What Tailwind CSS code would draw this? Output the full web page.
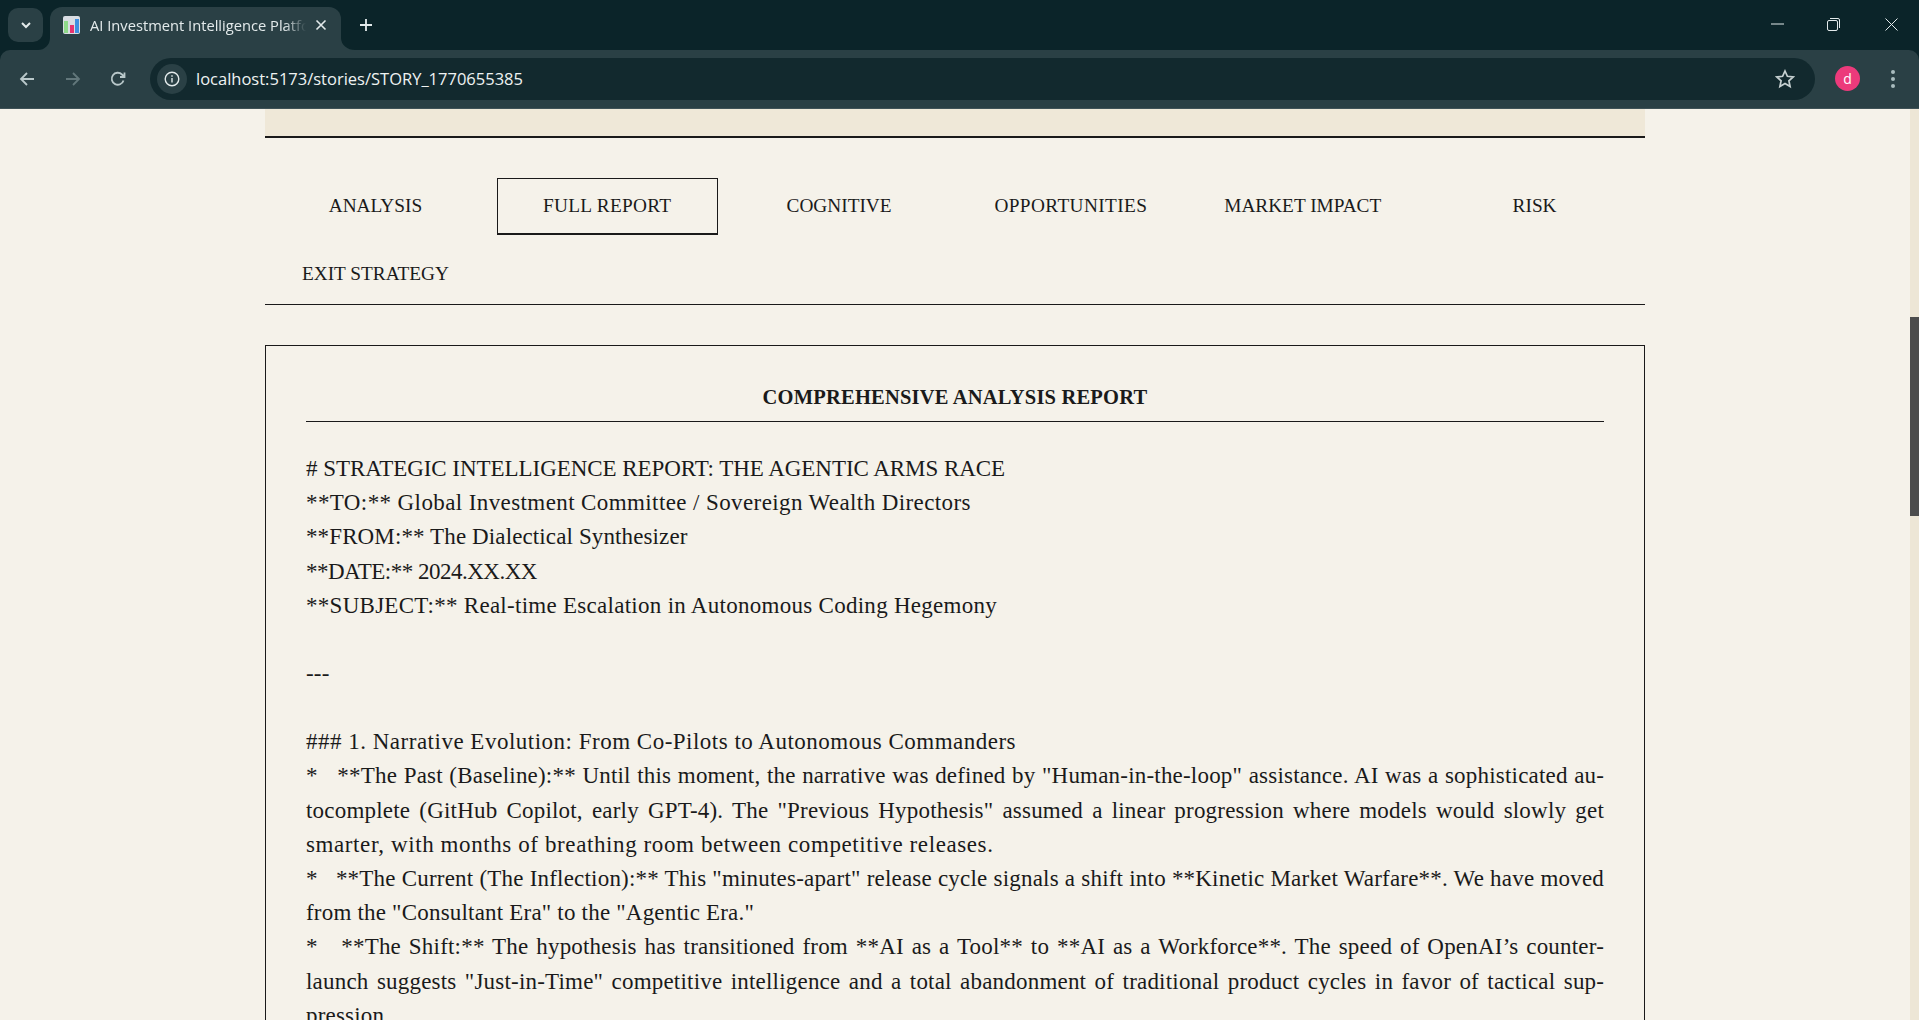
<!DOCTYPE html>
<html lang="en">
<head>
  <meta charset="UTF-8" />
  <title>AI Investment Intelligence Platform</title>
  <script src="https://cdn.jsdelivr.net/npm/@tailwindcss/browser@4"></script>
</head>
<body class="h-[1020px] overflow-hidden bg-[#f5f2ea] font-['Liberation_Serif',serif] text-[#1a1a1a]">
  <!-- Browser chrome -->
  <header class="bg-[#0b2429] font-['Open_Sans',sans-serif] text-[#e3eaeb]">
    <div class="flex h-[50px] pl-2 pt-2">
      <button class="flex h-[34px] w-[35px] items-center justify-center rounded-[10px] bg-[#2a4045]">
        <svg width="12" height="12" viewBox="0 0 12 12" fill="none" stroke="#e3eaeb" stroke-width="2"><path d="M2 4l4 4 4-4"/></svg>
      </button>
      <div class="relative -mt-px ml-[7px] flex h-[43px] w-[291px] items-center rounded-t-[12px] bg-[#2a4045] pb-[7px] pl-[13px] pr-[14px]">
        <svg class="absolute bottom-0 -left-[12px]" width="12" height="12" viewBox="0 0 12 12" fill="#2a4045"><path d="M12 0v12H0A12 12 0 0 0 12 0z"/></svg>
        <svg width="17" height="18" viewBox="0 0 17 18">
          <rect width="17" height="18" rx="2" fill="#d9dde3"/>
          <rect x="1" y="5" width="4" height="12" fill="#8fd98a"/>
          <rect x="7" y="9" width="4" height="8" fill="#e8336f"/>
          <rect x="12" y="3" width="4" height="14" fill="#3f8fe0"/>
        </svg>
        <span class="ml-[10px] w-[216px] overflow-hidden whitespace-nowrap text-[14.700px] mask-r-from-[90%] mask-r-to-100%">AI Investment Intelligence Platform</span>
        <svg class="ml-auto" width="12" height="12" viewBox="0 0 12 12" stroke="#e3eaeb" stroke-width="1.6"><path d="M1.5 1.5l9 9M10.500 1.500l-9 9"/></svg>
        <svg class="absolute bottom-0 -right-[14px]" width="14" height="12" viewBox="0 0 14 12" fill="#2a4045"><path d="M0 0v12h14A14 12 0 0 1 0 0z"/></svg>
      </div>
      <svg class="ml-[18px] mt-[10px]" width="14" height="14" viewBox="0 0 14 14" stroke="#e3eaeb" stroke-width="1.8"><path d="M7 1v12M1 7h12"/></svg>
      <div class="ml-auto flex pr-[5px]">
        <div class="flex h-[32px] w-[46px] items-center justify-center">
          <svg width="13" height="2" stroke="#e3eaeb"><path d="M0 1h13"/></svg>
        </div>
        <div class="ml-[10px] flex h-[32px] w-[46px] items-center justify-center">
          <svg width="13" height="13" viewBox="0 0 13 13" fill="none" stroke="#e3eaeb"><rect x=".5" y="2.500" width="10" height="10" rx="1.500"/><path d="M3 .5h8a1.500 1.500 0 0 1 1.500 1.500v8"/></svg>
        </div>
        <div class="ml-[12px] flex h-[32px] w-[46px] items-center justify-center">
          <svg width="13" height="13" viewBox="0 0 13 13" stroke="#e3eaeb"><path d="M.5.5l12 12M12.500.5l-12 12"/></svg>
        </div>
      </div>
    </div>
    <div class="flex h-[59px] items-center rounded-t-[10px] border-b border-[#3f5257] bg-[#2a4045] pb-px">
      <svg class="ml-[19px]" width="16" height="16" viewBox="0 0 16 16" fill="none" stroke="#b9c8ca" stroke-width="1.800"><path d="M15 8H2M8 2L2 8l6 6"/></svg>
      <svg class="ml-[30px]" width="16" height="16" viewBox="0 0 16 16" fill="none" stroke="#62777b" stroke-width="1.800"><path d="M1 8h13M8 2l6 6-6 6"/></svg>
      <svg class="ml-[29px]" width="16" height="16" viewBox="0 0 16 16" fill="none" stroke="#b9c8ca" stroke-width="1.800"><path d="M13.500 9.500A6 6 0 1 1 12 3.500L14 5.500M14.500 1.500v4.500h-4.500"/></svg>
      <div class="ml-[24px] flex h-[42px] w-[1665px] items-center rounded-full bg-[#12292e] pl-[7px] pr-[20px]">
        <div class="flex h-[30px] w-[30px] items-center justify-center rounded-full bg-[#2a4045]">
          <svg width="16" height="16" viewBox="0 0 16 16" fill="none" stroke="#e3eaeb" stroke-width="1.400"><circle cx="8" cy="8" r="6.800"/><path d="M8 7v4.500M8 4.300v1.400"/></svg>
        </div>
        <span class="ml-[9px] mt-[2px] text-[16.500px] text-[#eef2f2]">localhost:5173/stories/STORY_1770655385</span>
        <svg class="ml-auto" width="20" height="20" viewBox="0 0 20 20" fill="none" stroke="#c6d0d1" stroke-width="1.700"><path d="M10 2l2.400 5.300 5.800.6-4.300 3.900 1.200 5.700-5.100-2.900-5.100 2.900 1.200-5.700-4.300-3.900 5.800-.6z"/></svg>
      </div>
      <div class="ml-[20px] flex h-[25px] w-[25px] items-center justify-center rounded-full bg-[#ec3a7b] text-[14px] text-white">d</div>
      <div class="ml-[31px] flex flex-col gap-[3px]">
        <span class="h-1 w-1 rounded-full bg-[#a9bcbf]"></span>
        <span class="h-1 w-1 rounded-full bg-[#a9bcbf]"></span>
        <span class="h-1 w-1 rounded-full bg-[#a9bcbf]"></span>
      </div>
    </div>
  </header>

  <div class="flex h-[911px]">
    <!-- Page -->
    <main class="ml-[265px] w-[1380px]">
      <div class="h-[29px] border-b-2 border-[#1a1a1a] bg-[#efe8d8]"></div>

      <nav class="mt-[40px] grid grid-cols-6 gap-[11px] border-b border-[#1a1a1a] pb-px text-[19.300px]">
        <a class="flex h-[57px] items-center justify-center pb-px">ANALYSIS</a>
        <a class="flex h-[57px] items-center justify-center border border-b-2 border-[#1a1a1a] tracking-[0.3px]">FULL REPORT</a>
        <a class="flex h-[57px] items-center justify-center pb-px">COGNITIVE</a>
        <a class="flex h-[57px] items-center justify-center pb-px tracking-[0.4px]">OPPORTUNITIES</a>
        <a class="flex h-[57px] items-center justify-center pb-px">MARKET IMPACT</a>
        <a class="flex h-[57px] items-center justify-center pb-px">RISK</a>
        <a class="flex h-[57px] items-center justify-center pb-px">EXIT STRATEGY</a>
      </nav>

      <section class="mt-[40px] border border-[#1a1a1a] px-[40px] pt-[40px]">
        <h2 class="border-b border-[#1a1a1a] pb-[12px] text-center text-[20.500px] leading-[23px] font-bold tracking-[0.2px]">COMPREHENSIVE ANALYSIS REPORT</h2>
        <div class="mt-[30px] text-[23px] leading-[34.200px] tracking-[0.2px]">
          <p class="tracking-[-0.05px]"># STRATEGIC INTELLIGENCE REPORT: THE AGENTIC ARMS RACE</p>
          <p class="tracking-[0.4px]">**TO:** Global Investment Committee / Sovereign Wealth Directors</p>
          <p class="tracking-[0.12px]">**FROM:** The Dialectical Synthesizer</p>
          <p class="tracking-[-0.5px]">**DATE:** 2024.XX.XX</p>
          <p class="tracking-[0.28px]">**SUBJECT:** Real-time Escalation in Autonomous Coding Hegemony</p>
          <p class="mt-[34px]">---</p>
          <p class="mt-[34px] tracking-[0.5px]">### 1. Narrative Evolution: From Co-Pilots to Autonomous Commanders</p>
          <p class="whitespace-pre-wrap text-justify [hyphens:manual]">*   **The Past (Baseline):** Until this moment, the narrative was defined by "Human-in-the-loop" assistance. AI was a sophisticated au&shy;tocomplete (GitHub Copilot, early GPT-4). The "Previous Hypothesis" assumed a linear progression where models would slowly get <span class="tracking-[0.6px]">smarter, with months of breathing room between competitive releases.</span></p>
          <p class="whitespace-pre-wrap text-justify [hyphens:manual]">*   **The Current (The Inflection):** This "minutes-apart" release cycle signals a shift into **Kinetic Market Warfare**. We have moved from the "Consultant Era" to the "Agentic Era."</p>
          <p class="whitespace-pre-wrap text-justify [hyphens:manual]">*   **The Shift:** The hypothesis has transitioned from **AI as a Tool** to **AI as a Workforce**. The speed of OpenAI’s counter-launch suggests "Just-in-Time" competitive intelligence and a total abandonment of traditional product cycles in favor of tactical sup&shy;pression.</p>
        </div>
      </section>
    </main>

    <!-- Scrollbar -->
    <div class="ml-auto w-[9px] bg-[#ede6d6] pt-[208px]">
      <div class="h-[199px] bg-[#4c4c4c]"></div>
    </div>
  </div>
</body>
</html>
